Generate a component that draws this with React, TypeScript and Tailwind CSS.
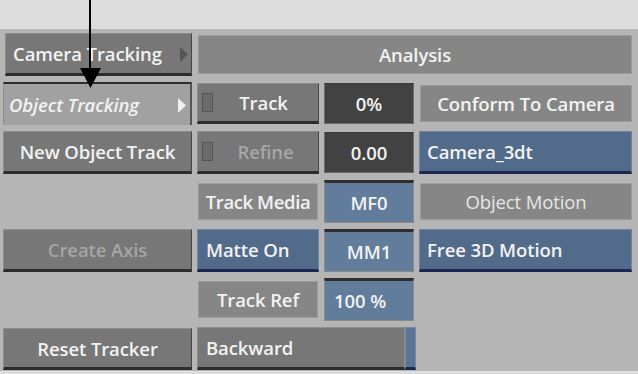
import React from "react";

const font = { fontFamily: '"Open Sans", "Liberation Sans", Arial, sans-serif' };

function Btn({ children, className = "" }: { children?: React.ReactNode; className?: string }) {
  return (
    <div
      className={
        "flex items-center pt-[2px] bg-[#777777] border border-[#8e8e8e] border-b-[3px] border-b-[#2c2c2c] border-r-[#444444] " +
        className
      }
    >
      {children}
    </div>
  );
}

function Label({ children, className = "" }: { children?: React.ReactNode; className?: string }) {
  return (
    <div
      className={
        "flex items-center justify-center pt-[2px] bg-[#868686] border border-[#9c9c9c] " + className
      }
    >
      {children}
    </div>
  );
}

function BlueBtn({ children, className = "" }: { children?: React.ReactNode; className?: string }) {
  return (
    <div
      className={
        "flex items-center pt-[2px] bg-[#536b8b] border border-[#6d84a2] border-b-[3px] border-b-[#1d2650] " + className
      }
    >
      {children}
    </div>
  );
}

function BlueField({ children, className = "" }: { children?: React.ReactNode; className?: string }) {
  return (
    <div
      className={
        "flex items-center pt-[1px] bg-[#627c9b] border border-[#8a8a8a] border-t-[3px] border-t-[#2e2e2e] " + className
      }
    >
      {children}
    </div>
  );
}

function DarkField({ children }: { children?: React.ReactNode }) {
  return (
    <div className="flex items-center justify-center pt-[2px] bg-[#424242] border border-[#6a6a6a] border-t-[#3a3a3a] my-[1px]">
      {children}
    </div>
  );
}

function Indicator() {
  return <div className="ml-[4px] -mt-[2px] w-[11px] h-[19px] bg-[#6b6b6b] border border-[#555555] shrink-0" />;
}

export default function App() {
  return (
    <div
      className="w-[638px] h-[374px] bg-[#dddddd] relative overflow-hidden text-[18.5px] font-semibold text-[#f2f2f2] leading-none tracking-[-0.1px]"
      style={font}
    >
      <div className="mt-[29px] h-[342px] bg-[#b5b5b5] pt-[4px] pl-[3px] pr-[6px]">
        <div className="grid grid-cols-[189px_122px_90px_213px] grid-rows-[repeat(7,43px)] gap-x-[5px] gap-y-[6px]">
          {/* Row 1 */}
          <Btn className="ml-[2px] pl-[7px] justify-between">
            <span>Camera Tracking</span>
            <svg width="9" height="15" viewBox="0 0 9 15" className="mr-[2px]">
              <polygon points="0,0 8,7.5 0,15" fill="#555555" />
            </svg>
          </Btn>
          <div className="col-span-3 ml-[1px] my-[2px] pt-[2px] flex items-center justify-center bg-[#868686] border border-[#9c9c9c]">
            Analysis
          </div>

          {/* Row 2 */}
          <div className="flex items-center justify-between pt-[2px] bg-[#a1a1a1] border-t-[2px] border-t-[#2e2e2e] border-r-[2px] border-r-[#555555] border-l border-l-[#8e8e8e] pl-[5px]">
            <span className="italic">Object Tracking</span>
            <svg width="9" height="15" viewBox="0 0 9 15" className="mr-[3px]">
              <polygon points="0,0 8,7.5 0,15" fill="#f0f0f0" />
            </svg>
          </div>
          <Btn className="my-[1px]">
            <Indicator />
            <span className="flex-1 text-center pr-[4px]">Track</span>
          </Btn>
          <DarkField>0%</DarkField>
          <Label className="ml-[1px] my-[3px]">Conform To Camera</Label>

          {/* Row 3 */}
          <Btn className="justify-center">New Object Track</Btn>
          <Btn>
            <Indicator />
            <span className="flex-1 text-center text-[#a8a8a8]">Refine</span>
          </Btn>
          <DarkField>0.00</DarkField>
          <BlueBtn className="pl-[7px]">Camera_3dt</BlueBtn>

          {/* Row 4 */}
          <div />
          <Label className="ml-[1px] mr-[1px] my-[3px] tracking-[-0.4px]">Track Media</Label>
          <BlueField className="justify-center">MF0</BlueField>
          <Label className="ml-[1px] my-[3px] text-[#e6e6e6] font-normal">Object Motion</Label>

          {/* Row 5 */}
          <Btn className="justify-center text-[#a6a6a6]">Create Axis</Btn>
          <BlueBtn className="pl-[8px]">Matte On</BlueBtn>
          <BlueField className="justify-center">MM1</BlueField>
          <BlueBtn className="pl-[7px]">Free 3D Motion</BlueBtn>

          {/* Row 6 */}
          <div />
          <Label className="ml-[1px] mr-[1px] my-[3px]">Track Ref</Label>
          <BlueField className="pl-[9px]">100 %</BlueField>
          <div />

          {/* Row 7 */}
          <Btn className="justify-center mt-[1px]">Reset Tracker</Btn>
          <div className="col-span-2 flex">
            <div className="w-[208px] shrink-0 flex items-center pt-[2px] pl-[8px] bg-[#777777] border border-[#8e8e8e] border-b-[3px] border-b-[#2c2c2c]">
              Backward
            </div>
            <div className="w-[11px] shrink-0 bg-[#5d7595] border border-[#7389a6] border-b-[3px] border-b-[#1d2650]" />
          </div>
          <div />
        </div>
      </div>

      {/* Callout arrow */}
      <div className="absolute left-[89px] top-0 w-[2px] h-[72px] bg-black" />
      <svg className="absolute left-[80px] top-[68px]" width="21" height="21" viewBox="0 0 21 21">
        <polygon points="0,0 21,0 10.5,20" fill="#000000" />
      </svg>
    </div>
  );
}
